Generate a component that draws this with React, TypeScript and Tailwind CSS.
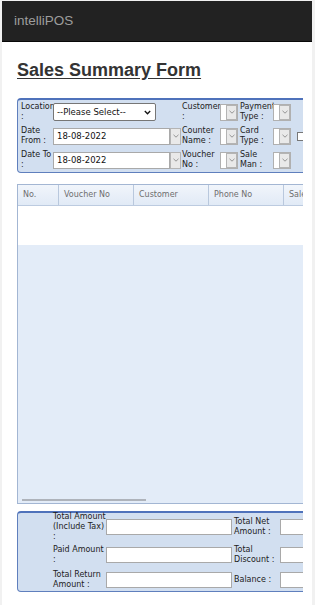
import React from "react";

// ── Small form bits ─────────────────────────────────────────────────────────

const font = "font-['DejaVu_Sans',sans-serif]";

function Label({ children, className = "" }: { children: React.ReactNode; className?: string }) {
  return (
    <span className={`self-center text-[8px] leading-[10px] text-[#222] ${className}`}>
      {children}
    </span>
  );
}

function ArrowBtn() {
  return (
    <span className="flex h-full w-[11px] shrink-0 items-center justify-center border border-[#b4b4b4] bg-[#e9e9e9]">
      <svg width="6" height="4" viewBox="0 0 6 4">
        <path d="M0.5 0.8 L3 3.2 L5.5 0.8" fill="none" stroke="#8a8a8a" strokeWidth="0.9" />
      </svg>
    </span>
  );
}

function DateBox({ value }: { value: string }) {
  return (
    <div className="flex h-[17px] w-[128px] items-stretch self-center">
      <span className="flex flex-1 items-center border border-[#a9a9a9] bg-white pl-[3px] text-[8.5px] text-[#111]">
        {value}
      </span>
      <ArrowBtn />
    </div>
  );
}

function MiniSelect() {
  return (
    <div className="flex h-[17px] w-[18px] items-stretch self-center border border-[#b0b0b0] bg-white pl-[5px]">
      <ArrowBtn />
    </div>
  );
}

function TextBox({ className = "" }: { className?: string }) {
  return <div className={`h-[16px] self-center border border-[#a9a9a9] bg-white ${className}`} />;
}

// ── Page ───────────────────────────────────────────────────────────────────

export default function App() {
  return (
    <div className={`h-[605px] w-[315px] overflow-hidden bg-[#f1f1f1] pl-[2px] pt-px ${font}`}>
      <div className="h-full w-[310px] bg-white">
        {/* navbar */}
        <header className="flex h-[41px] items-center border-b border-[#080808] bg-[#222] pl-[12px]">
          <span className="font-['Liberation_Sans',Arial,sans-serif] text-[13.5px] text-[#9d9d9d]">
            intelliPOS
          </span>
        </header>

        <div className="w-[301px] overflow-hidden pl-[15px]">
          <h1 className="mt-[18px] font-['Liberation_Sans',Arial,sans-serif] text-[18px] font-bold leading-[20px] text-[#333] underline underline-offset-[2px]">
            Sales Summary Form
          </h1>

          {/* ── filter panel ── */}
          <div className="mt-[18px] w-[320px] rounded-[4px] border border-t-2 border-[#5f7fbd] border-t-[#4f72bb] bg-[#d2dff0] pl-[3px]">
            <div className="grid grid-cols-[32px_128px_39px_18px_2px_33px_18px_auto] grid-rows-[24px_24px_24px] items-center">
              <Label>
                Location
                <br />:
              </Label>
              <div className="flex h-[18px] w-[103px] items-center justify-between self-center rounded-[2px] border border-[#767676] bg-white pl-[3px] pr-[4px] text-[8.5px] text-[#111]">
                <span>--Please Select--</span>
                <svg width="7" height="5" viewBox="0 0 7 5">
                  <path d="M0.8 1 L3.5 3.8 L6.2 1" fill="none" stroke="#111" strokeWidth="1.3" />
                </svg>
              </div>
              <Label className="pl-px">
                Customer
                <br />:
              </Label>
              <MiniSelect />
              <span />
              <Label>
                Payment
                <br />
                Type :
              </Label>
              <MiniSelect />
              <span />

              <Label>
                Date
                <br />
                From :
              </Label>
              <DateBox value="18-08-2022" />
              <Label className="pl-px">
                Counter
                <br />
                Name :
              </Label>
              <MiniSelect />
              <span />
              <Label>
                Card
                <br />
                Type :
              </Label>
              <MiniSelect />
              <span className="ml-[6px] h-[9px] w-[9px] self-center border border-[#777] bg-white" />

              <Label>
                Date To
                <br />:
              </Label>
              <DateBox value="18-08-2022" />
              <Label className="pl-px">
                Voucher
                <br />
                No :
              </Label>
              <MiniSelect />
              <span />
              <Label>
                Sale
                <br />
                Man :
              </Label>
              <MiniSelect />
              <span />
            </div>
          </div>

          {/* ── grid ── */}
          <div className="mt-[11px] flex h-[320px] w-[320px] flex-col border border-[#a3b6d3]">
            <div className="flex h-[21px] border-b border-[#bccbe0] bg-[linear-gradient(#f1f5fb,#e1eaf6)] text-[8px] text-[#6e6e6e]">
              <div className="flex w-[41px] items-center border-r border-[#b9c8dd] pl-[5px]">No.</div>
              <div className="flex w-[75px] items-center border-r border-[#b9c8dd] pl-[5px]">Voucher No</div>
              <div className="flex w-[75px] items-center border-r border-[#b9c8dd] pl-[5px]">Customer</div>
              <div className="flex w-[75px] items-center border-r border-[#b9c8dd] pl-[5px]">Phone No</div>
              <div className="flex flex-1 items-center pl-[5px]">Sale Man</div>
            </div>
            <div className="h-[39px] bg-white" />
            <div className="flex flex-1 flex-col justify-end bg-[#e3ecf8] pb-[2px] pl-[4px]">
              <div className="h-[2px] w-[124px] bg-[#aeb3bb]" />
            </div>
          </div>

          {/* ── totals panel ── */}
          <div className="mt-[7px] w-[320px] rounded-[4px] border border-t-2 border-[#5f7fbd] border-t-[#4f72bb] bg-[#d2dff0] pl-[35px]">
            <div className="grid grid-cols-[53px_126px_2px_46px_60px] grid-rows-[28px_28px_22px] items-center">
              <Label>
                Total Amount
                <br />
                (Include Tax)
                <br />:
              </Label>
              <TextBox />
              <span />
              <Label>
                Total Net
                <br />
                Amount :
              </Label>
              <TextBox />

              <Label>
                Paid Amount
                <br />:
              </Label>
              <TextBox />
              <span />
              <Label>
                Total
                <br />
                Discount :
              </Label>
              <TextBox />

              <Label>
                Total Return
                <br />
                Amount :
              </Label>
              <TextBox />
              <span />
              <Label>Balance :</Label>
              <TextBox />
            </div>
          </div>
        </div>
      </div>
    </div>
  );
}
